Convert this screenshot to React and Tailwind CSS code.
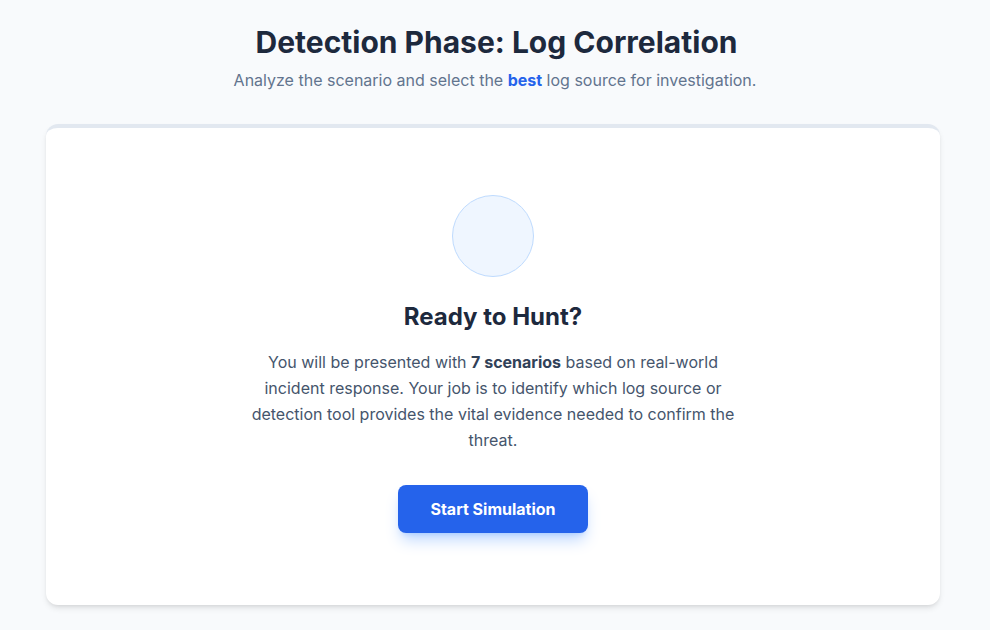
export default function App() {
  return (
    <div
      className="min-h-screen bg-slate-50 pt-6 pb-6"
      style={{ fontFamily: "Inter, 'Noto Sans', sans-serif" }}
    >
      <div className="text-center">
        <h1 className="pl-[3px] text-3xl font-bold text-slate-800">Detection Phase: Log Correlation</h1>
        <p className="mt-2 text-base text-slate-500">
          Analyze the scenario and select the <span className="font-bold text-[#2563eb]">best</span> log
          source for investigation.
        </p>
      </div>

      <div className="mt-8 ml-[46px] w-[894px] rounded-xl border-t-4 border-slate-200 bg-white shadow-md">
        <div className="flex flex-col items-center px-8 pt-[67px] pb-[72px] text-center">
          <div className="h-[82px] w-[82px] rounded-full border border-[#bfdbfe] bg-[#eff6ff]" />
          <h2 className="mt-6 text-2xl font-bold text-slate-800">Ready to Hunt?</h2>
          <p className="mt-4 max-w-lg text-base leading-relaxed text-slate-600">
            You will be presented with <span className="font-bold text-slate-700">7 scenarios</span> based on
            real-world incident response. Your job is to identify which log source or detection tool provides
            the vital evidence needed to confirm the threat.
          </p>
          <button
            type="button"
            className="mt-8 rounded-lg bg-[#2563eb] px-8 py-3 text-base font-bold text-white shadow-lg shadow-blue-500/30"
          >
            Start Simulation
          </button>
        </div>
      </div>
    </div>
  );
}
